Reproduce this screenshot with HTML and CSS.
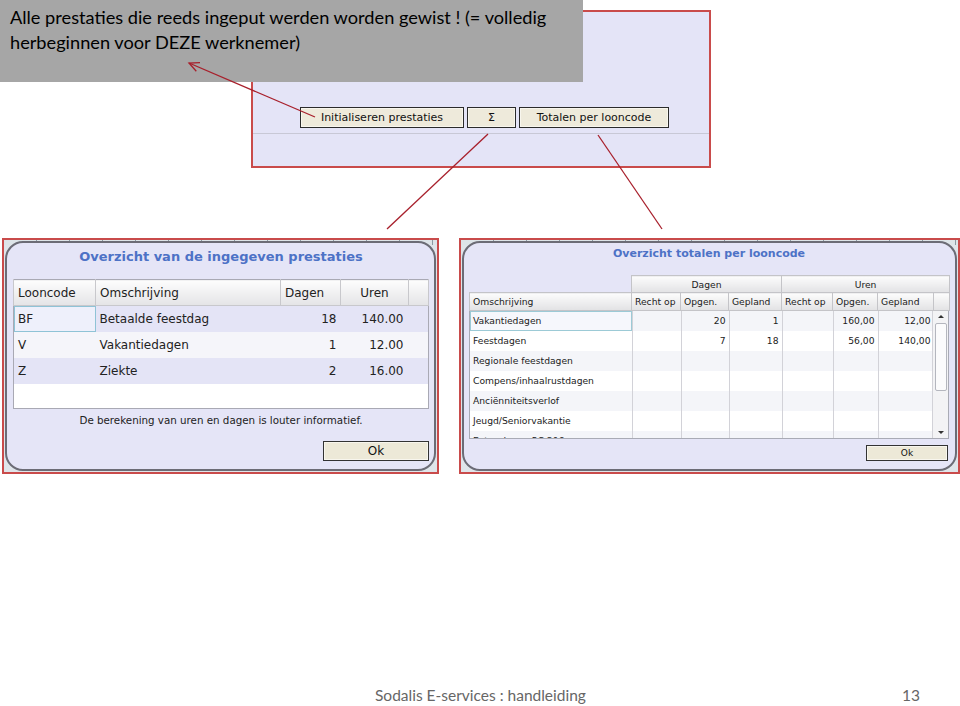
FILE: index.html
```html
<!DOCTYPE html>
<html lang="nl">
<head>
  <meta charset="UTF-8" />
  <title>Sodalis E-services : handleiding</title>
  <link rel="stylesheet" href="styles.css">
</head>
<body>
  <div class="slide">
    <!-- Callout above the screenshot -->
    <div class="callout">Alle prestaties die reeds ingeput werden worden gewist ! (= volledig<br>herbeginnen voor DEZE werknemer)</div>

    <!-- Arrows -->
    <svg class="arrows" width="960" height="706" viewBox="0 0 960 706">
      <g stroke="#a8202c" stroke-width="1.3" fill="none">
        <line x1="315" y1="117" x2="189" y2="63"/>
        <polyline points="200,62.6 189,63 196.3,71.2"/>
        <line x1="488" y1="134" x2="387" y2="229"/>
        <line x1="598" y1="135" x2="662" y2="229"/>
      </g>
    </svg>

    <!-- Screenshot: button bar -->
    <div class="top-shot">
      <div class="btn-row">
        <button class="btn btn-init">Initialiseren prestaties</button>
        <button class="btn btn-sum">Σ</button>
        <button class="btn btn-tot">Totalen per looncode</button>
      </div>
      <div class="divider"></div>
    </div>

    <!-- Screenshots: the two dialogs -->
    <div class="dialogs">
      <div class="frame frame-left">
        <div class="dialog dialog-left">
          <h2 class="dlg-title">Overzicht van de ingegeven prestaties</h2>
          <table class="grid-l">
            <colgroup>
              <col style="width:82px"><col style="width:185px"><col style="width:60px"><col style="width:68px"><col>
            </colgroup>
            <tr>
              <th>Looncode</th><th>Omschrijving</th><th>Dagen</th><th class="center">Uren</th><th></th>
            </tr>
            <tr class="odd">
              <td class="sel">BF</td><td>Betaalde feestdag</td><td class="num">18</td><td class="num">140.00</td><td></td>
            </tr>
            <tr class="even">
              <td>V</td><td>Vakantiedagen</td><td class="num">1</td><td class="num">12.00</td><td></td>
            </tr>
            <tr class="odd">
              <td>Z</td><td>Ziekte</td><td class="num">2</td><td class="num">16.00</td><td></td>
            </tr>
            <tr class="blank-row"><td colspan="5"></td></tr>
          </table>
          <p class="note">De berekening van uren en dagen is louter informatief.</p>
          <button class="ok ok-left">Ok</button>
        </div>
      </div>

      <div class="frame frame-right">
        <div class="dialog dialog-right">
          <h2 class="dlg-title small">Overzicht totalen per looncode</h2>
          <div class="tot-grid">
            <table class="tot-head">
              <colgroup>
                <col style="width:162px"><col style="width:49px"><col style="width:48px"><col style="width:53px">
                <col style="width:51px"><col style="width:45px"><col style="width:56px"><col style="width:16px">
              </colgroup>
              <tr class="group">
                <th class="blank"></th><th colspan="3">Dagen</th><th colspan="4">Uren</th>
              </tr>
              <tr>
                <th>Omschrijving</th><th>Recht op</th><th>Opgen.</th><th>Gepland</th>
                <th>Recht op</th><th>Opgen.</th><th>Gepland</th><th></th>
              </tr>
            </table>
            <div class="tot-body">
              <div class="tot-rows">
                <table>
                  <colgroup>
                    <col style="width:162px"><col style="width:49px"><col style="width:48px"><col style="width:53px">
                    <col style="width:51px"><col style="width:45px"><col style="width:56px">
                  </colgroup>
                  <tr class="odd"><td class="sel">Vakantiedagen</td><td></td><td class="num">20</td><td class="num">1</td><td></td><td class="num">160,00</td><td class="num">12,00</td></tr>
                  <tr class="even"><td>Feestdagen</td><td></td><td class="num">7</td><td class="num">18</td><td></td><td class="num">56,00</td><td class="num">140,00</td></tr>
                  <tr class="odd"><td>Regionale feestdagen</td><td></td><td></td><td></td><td></td><td></td><td></td></tr>
                  <tr class="even"><td>Compens/inhaalrustdagen</td><td></td><td></td><td></td><td></td><td></td><td></td></tr>
                  <tr class="odd"><td>Anciënniteitsverlof</td><td></td><td></td><td></td><td></td><td></td><td></td></tr>
                  <tr class="even"><td>Jeugd/Seniorvakantie</td><td></td><td></td><td></td><td></td><td></td><td></td></tr>
                  <tr class="odd"><td>Extra dagen PC 306</td><td></td><td></td><td></td><td></td><td></td><td></td></tr>
                </table>
              </div>
              <div class="scrollbar">
                <span class="sb-up"></span>
                <span class="sb-thumb"></span>
                <span class="sb-down"></span>
              </div>
            </div>
          </div>
          <button class="ok ok-right">Ok</button>
        </div>
      </div>
    </div>

    <!-- Slide footer -->
    <div class="slide-foot">
      <span>Sodalis E-services : handleiding</span>
      <span class="page-no">13</span>
    </div>
  </div>
</body>
</html>
```

FILE: styles.css
```css
/* Global */
* {
  box-sizing: border-box;
}
body {
  margin: 0;
  background: #fff;
  font-family: Lato, "Liberation Sans", Arial, sans-serif;
}
.slide {
  position: relative;
  width: 960px;
  height: 706px;
  display: flex;
  flex-direction: column;
  overflow: hidden;
}

/* Callout + arrows (overlays) */
.callout {
  position: absolute;
  top: 0;
  left: 0;
  width: 583px;
  height: 82px;
  padding: 5px 10px;
  background: #a6a6a6;
  color: #000;
  font-size: 18.2px;
  line-height: 25px;
  z-index: 2;
}
.arrows {
  position: absolute;
  top: 0;
  left: 0;
  z-index: 3;
  pointer-events: none;
}

/* Top screenshot with the button bar */
.top-shot {
  margin: 10px 0 0 251px;
  width: 460px;
  height: 158px;
  padding-top: 95px;
  border: 2px solid #c94b4b;
  background: #e4e4f7;
}
.btn-row {
  display: flex;
  gap: 3px;
  padding-left: 47px;
}
.btn {
  height: 21px;
  padding: 0;
  border: 1px solid #2b2b2b;
  background: #eeeadb;
  box-shadow: inset 0 0 0 1px #f8f6ee;
  color: #111;
  font: 11px "DejaVu Sans", Verdana, sans-serif;
}
.btn-init { width: 164px; }
.btn-sum { width: 49px; font-size: 11px; }
.btn-tot { width: 150px; }
.divider {
  margin-top: 5px;
  border-top: 1px solid #c8c8d6;
}

/* Dialog screenshots */
.dialogs {
  display: flex;
  gap: 20px;
  margin-top: 70px;
  padding-left: 2px;
}
.frame {
  height: 236px;
  padding: 1px;
  border: 2px solid #c94b4b;
  background: repeating-linear-gradient(90deg, #dde4e8 0 32px, #8c9aa2 32px 33px) top / 100% 5px no-repeat, #dfe5ea;
}
.frame-left { width: 437px; }
.frame-right { width: 501px; }
.dialog {
  height: 100%;
  display: flex;
  flex-direction: column;
  border: 2px solid #6c6c76;
  border-radius: 18px;
  background: #e5e5f7;
  color: #222;
  font-family: "DejaVu Sans", Verdana, sans-serif;
}
.dlg-title {
  margin: 0;
  text-align: center;
  color: #4d72c6;
  font-size: 13px;
  font-weight: bold;
  line-height: 18px;
}
.dlg-title.small {
  font-size: 11px;
  line-height: 14px;
}
.ok {
  align-self: flex-end;
  padding: 0;
  border: 1px solid #333;
  background: #ede9d8;
  box-shadow: inset 0 0 0 1px #f8f6ee;
  color: #111;
  font-family: "DejaVu Sans", Verdana, sans-serif;
}

/* Left dialog */
.dialog-left {
  padding: 5px 5px 8px 6px;
}
.dialog-left .dlg-title {
  margin-bottom: 13px;
}
.grid-l {
  width: 416px;
  table-layout: fixed;
  border-collapse: collapse;
  border: 1px solid #a9a9b4;
  background: #fff;
  font-size: 12px;
}
.grid-l th {
  height: 26px;
  padding: 0 4px;
  border: 1px solid #c8c8cc;
  border-top: none;
  background: linear-gradient(#fdfdfd, #e4e4e6);
  text-align: left;
  font-weight: normal;
}
.grid-l th.center { text-align: center; }
.grid-l td {
  height: 26px;
  padding: 0 4px;
}
.grid-l .odd { background: #e4e4f6; }
.grid-l .even { background: #f5f5fa; }
.grid-l .blank-row td { height: 25px; background: #fff; }
.grid-l td.num { text-align: right; }
.grid-l td.num + td.num { padding-right: 5px; }
.grid-l td.sel {
  background: #eef0fb;
  box-shadow: inset 0 0 0 1px #8fc3d6;
}
.note {
  margin: 5px 0 0;
  text-align: center;
  font-size: 10.3px;
  line-height: 12px;
}
.ok-left {
  width: 106px;
  height: 21px;
  margin-top: 15px;
  font-size: 12px;
}

/* Right dialog */
.dialog-right {
  padding: 4px 6px 0 5px;
}
.dialog-right .dlg-title {
  margin-bottom: 14px;
}
.tot-grid {
  width: 480px;
  font-size: 9.2px;
}
.tot-head {
  width: 480px;
  table-layout: fixed;
  border-collapse: collapse;
}
.tot-head th {
  height: 18px;
  padding: 0 3px;
  border: 1px solid #c4c4c8;
  background: linear-gradient(#fcfcfc, #e2e2e4);
  text-align: left;
  font-weight: normal;
}
.tot-head .group th {
  height: 17px;
  text-align: center;
}
.tot-head .group th.blank {
  border: none;
  background: transparent;
}
.tot-body {
  display: flex;
  height: 128px;
  border: 1px solid #a9abb5;
  border-top: none;
  background: #fff;
}
.tot-rows {
  flex: 1;
  overflow: hidden;
}
.tot-rows table {
  width: 463px;
  table-layout: fixed;
  border-collapse: collapse;
}
.tot-rows td {
  height: 20px;
  padding: 0 3px 2px;
  border-right: 1px solid #d2d2d8;
  white-space: nowrap;
}
.tot-rows .odd { background: #f4f5f9; }
.tot-rows .even { background: #fff; }
.tot-rows td.num { text-align: right; }
.tot-rows td.sel {
  background: #f6f7fc;
  box-shadow: inset 0 0 0 1px #9ccad6;
}
.scrollbar {
  width: 16px;
  display: flex;
  flex-direction: column;
  align-items: center;
  border-left: 1px solid #d2d2d8;
  background: #f3f3f5;
}
.sb-up,
.sb-down {
  width: 0;
  height: 0;
  margin: 4px 0;
  border-left: 3px solid transparent;
  border-right: 3px solid transparent;
}
.sb-up { border-bottom: 3px solid #333; }
.sb-down { margin-top: auto; border-top: 3px solid #333; }
.sb-thumb {
  width: 12px;
  height: 68px;
  margin-top: 1px;
  border: 1px solid #b4b6be;
  border-radius: 2px;
  background: #fbfbfc;
}
.ok-right {
  width: 82px;
  height: 16px;
  margin-top: 6px;
  margin-right: 1px;
  font-size: 9px;
}

/* Slide footer */
.slide-foot {
  margin-top: auto;
  height: 22px;
  display: flex;
  align-items: center;
  padding: 0 40px 0 375px;
  color: #666;
  font-size: 15.5px;
}
.page-no {
  margin-left: auto;
}
```
